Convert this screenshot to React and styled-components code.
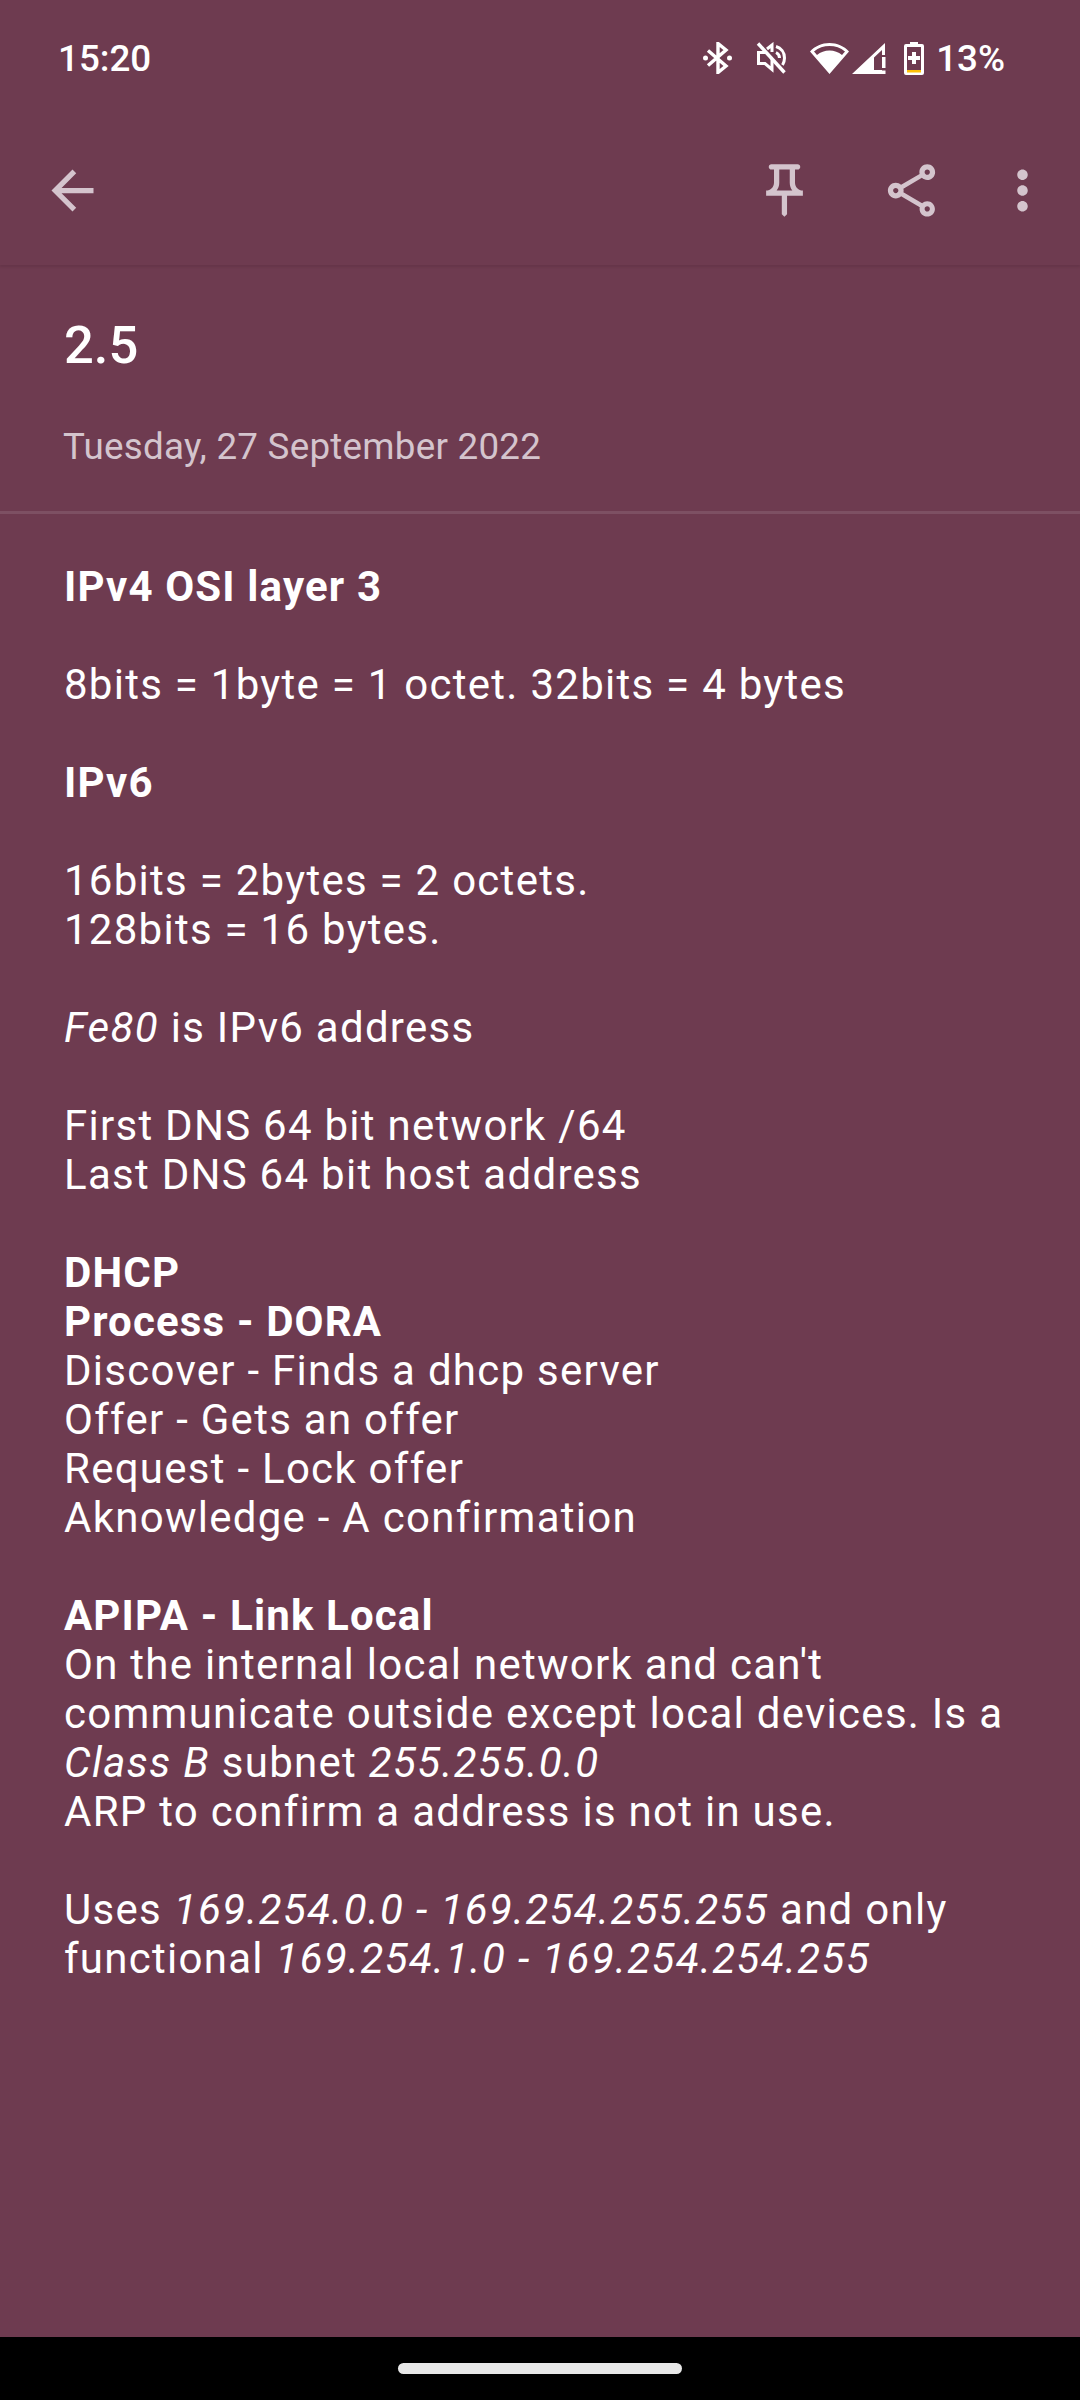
import React from 'react';
import styled, { createGlobalStyle } from 'styled-components';

const GlobalStyle = createGlobalStyle`
  html, body {
    margin: 0;
    padding: 0;
    background: #6e3b50;
  }
  * {
    box-sizing: border-box;
  }
`

const Screen = styled.div`
  display: flex;
  flex-direction: column;
  width: 1080px;
  height: 2400px;
  overflow: hidden;
  background: #6e3b50;
  color: #fff;
  font-family: Roboto, "Noto Sans", sans-serif;
`

const StatusBar = styled.div`
  display: flex;
  align-items: center;
  height: 116px;
  padding: 0 75px 0 58px;
  font-size: 36.75px;
  font-weight: 500;
`

const StatusIcons = styled.div`
  display: flex;
  align-items: center;
  margin-left: auto;
`

const StatusIcon = styled.svg`
  display: block;
  fill: #fff;
  margin-left: ${p => p.$gap}px;
`

const StatusLabel = styled.span`
  margin-left: 12px;
`

const Toolbar = styled.div`
  display: flex;
  align-items: center;
  height: 149px;
  padding: 0 26px 0 41px;
  box-shadow: 0 2px 2px rgba(60, 25, 40, 0.16);
`

const ToolbarActions = styled.div`
  display: flex;
  margin-left: auto;
`

const ToolbarIcon = styled.svg`
  display: block;
  width: 63px;
  height: 63px;
  fill: #d4c4cd;
  margin-left: ${p => p.$gap || 0}px;
`

const NoteHeader = styled.div`
  padding: 0 64px;
  height: 249px;
  border-bottom: 3px solid #7d5063;
`

const Title = styled.div`
  padding-top: 49px;
  font-size: 52.5px;
  line-height: 62px;
  font-weight: 500;
`

const DateLine = styled.div`
  margin-top: 49px;
  margin-left: -1px;
  font-size: 36.75px;
  line-height: 43px;
  letter-spacing: 0.25px;
  color: #d4c4cd;
`

const NoteBody = styled.div`
  flex: 1;
  padding: 48px 0 0 64px;
  font-size: 42px;
  line-height: 49px;
  letter-spacing: 1.27px;
  white-space: nowrap;

  em {
    letter-spacing: 1.4px;
  }
`

const Line = styled.div`
  height: 49px;
  font-weight: ${p => (p.$bold ? 700 : 400)};
  letter-spacing: ${p => (p.$bold ? '1.15px' : 'inherit')};
`

const NavBar = styled.div`
  display: flex;
  justify-content: center;
  height: 63px;
  padding-top: 26px;
  background: #000;
`

const NavPill = styled.div`
  width: 284px;
  height: 11px;
  border-radius: 6px;
  background: #e8e8e8;
`

const App = () => (
  <Screen>
    <GlobalStyle />
    <StatusBar>
      <span>15:20</span>
      <StatusIcons>
        <StatusIcon $gap={0} width="29" height="32" viewBox="0 0 29 32">
          <path d="M5 8.500 23 24l-8 6.500V1.500L23 8 5 23.500" fill="none" stroke="#fff" strokeWidth="3.400" />
          <circle cx="2.500" cy="16" r="2.500" />
          <circle cx="26.500" cy="16" r="2.500" />
        </StatusIcon>
        <StatusIcon $gap={24} width="30" height="32" viewBox="0 0 30 32">
          <path d="M2 1.500 28.500 30.500" fill="none" stroke="#fff" strokeWidth="3.400" />
          <path d="M9 10.500H2.500v11H9l7 6V17M11 7l5-4v7" fill="none" stroke="#fff" strokeWidth="3" />
          <path d="M20 4.500c5 1.500 8.500 6 8.500 11.500 0 2.500-.7 5-2 7M20 10.500c2.200 1 3.500 3 3.500 5.500" fill="none" stroke="#fff" strokeWidth="3" />
        </StatusIcon>
        <StatusIcon $gap={24} width="39" height="31" viewBox="0 0 39 31">
          <path fillRule="evenodd" d="M19.500 31 0 8.500C5 3 12 0 19.500 0S34 3 39 8.500L19.500 31zM4 8.500C8.500 4.800 13.800 3 19.500 3S30.500 4.800 35 8.500L32 12C28.500 9 24.200 7.500 19.500 7.500S10.500 9 7 12z" />
        </StatusIcon>
        <StatusIcon $gap={3} width="34" height="31" viewBox="0 0 34 31">
          <path d="M0 31 33 0v12h-3V7l-8 7.500V27h8v4H0z" />
          <path d="M30 14h3.500v11H30zM30 27.500h3.500V31H30z" />
        </StatusIcon>
        <StatusIcon $gap={18} width="20" height="33" viewBox="0 0 20 33">
          <path fillRule="evenodd" d="M6 0h8v2h4a2 2 0 0 1 2 2v27a2 2 0 0 1-2 2H2a2 2 0 0 1-2-2V4a2 2 0 0 1 2-2h4V0zM3 5v23h14V5H3z" />
          <path d="M8.500 12h4v4h4v4h-4v4h-4v-4h-4v-4h4z" transform="translate(-.5 -2)" />
          <path fill="#ffc107" d="M3 28h14v2.500H3z" />
        </StatusIcon>
        <StatusLabel>13%</StatusLabel>
      </StatusIcons>
    </StatusBar>
    <Toolbar>
      <ToolbarIcon viewBox="0 0 24 24">
        <path d="M20 11H7.830l5.590-5.590L12 4l-8 8 8 8 1.410-1.410L7.830 13H20v-2z" />
      </ToolbarIcon>
      <ToolbarActions>
        <ToolbarIcon viewBox="0 0 24 24">
          <path d="M14,4v5c0,1.120,0.370,2.160,1,3H9c0.650-0.860,1-1.900,1-3V4H14 M17,2H7C6.450,2,6,2.450,6,3c0,0.550,0.450,1,1,1l1,0v5c0,1.660-1.340,3-3,3v2h5.970v7l1,1l1-1v-7H19v-2c-1.660,0-3-1.340-3-3V4l1,0c0.550,0,1-0.450,1-1C18,2.450,17.550,2,17,2L17,2z" />
        </ToolbarIcon>
        <ToolbarIcon $gap={64} viewBox="0 0 24 24">
          <path d="M18 16.080c-.76 0-1.440.3-1.960.77L8.910 12.700c.05-.23.09-.46.09-.7s-.04-.47-.09-.7l7.050-4.110c.54.5 1.250.81 2.040.81 1.660 0 3-1.340 3-3s-1.340-3-3-3-3 1.340-3 3c0 .24.04.47.09.7L8.040 9.810C7.500 9.310 6.790 9 6 9c-1.660 0-3 1.340-3 3s1.340 3 3 3c.79 0 1.500-.31 2.040-.81l7.120 4.160c-.05.21-.08.43-.08.65 0 1.610 1.310 2.920 2.920 2.920s2.920-1.310 2.920-2.920-1.310-2.920-2.920-2.920zM18 4c.55 0 1 .45 1 1s-.45 1-1 1-1-.45-1-1 .45-1 1-1zM6 13c-.55 0-1-.45-1-1s.45-1 1-1 1 .45 1 1-.45 1-1 1zm12 7.020c-.55 0-1-.45-1-1s.45-1 1-1 1 .45 1 1-.45 1-1 1z" />
        </ToolbarIcon>
        <ToolbarIcon $gap={48} viewBox="0 0 24 24">
          <path d="M12 8c1.100 0 2-.9 2-2s-.9-2-2-2-2 .9-2 2 .9 2 2 2zm0 2c-1.100 0-2 .9-2 2s.9 2 2 2 2-.9 2-2-.9-2-2-2zm0 6c-1.100 0-2 .9-2 2s.9 2 2 2 2-.9 2-2-.9-2-2-2z" />
        </ToolbarIcon>
      </ToolbarActions>
    </Toolbar>
    <NoteHeader>
      <Title>2.5</Title>
      <DateLine>Tuesday, 27 September 2022</DateLine>
    </NoteHeader>
    <NoteBody>
      <Line $bold>IPv4 OSI layer 3</Line>
      <Line />
      <Line>8bits = 1byte = 1 octet. 32bits = 4 bytes</Line>
      <Line />
      <Line $bold>IPv6</Line>
      <Line />
      <Line>16bits = 2bytes = 2 octets.</Line>
      <Line>128bits = 16 bytes.</Line>
      <Line />
      <Line><em>Fe80</em> is IPv6 address</Line>
      <Line />
      <Line>First DNS 64 bit network /64</Line>
      <Line>Last DNS 64 bit host address</Line>
      <Line />
      <Line $bold>DHCP</Line>
      <Line $bold>Process - DORA</Line>
      <Line>Discover - Finds a dhcp server</Line>
      <Line>Offer - Gets an offer</Line>
      <Line>Request - Lock offer</Line>
      <Line>Aknowledge - A confirmation</Line>
      <Line />
      <Line $bold>APIPA - Link Local</Line>
      <Line>On the internal local network and can't</Line>
      <Line>communicate outside except local devices. Is a</Line>
      <Line><em>Class B</em> subnet <em>255.255.0.0</em></Line>
      <Line>ARP to confirm a address is not in use.</Line>
      <Line />
      <Line>Uses <em>169.254.0.0 - 169.254.255.255</em> and only</Line>
      <Line>functional <em>169.254.1.0 - 169.254.254.255</em></Line>
    </NoteBody>
    <NavBar>
      <NavPill />
    </NavBar>
  </Screen>
)

export default App
